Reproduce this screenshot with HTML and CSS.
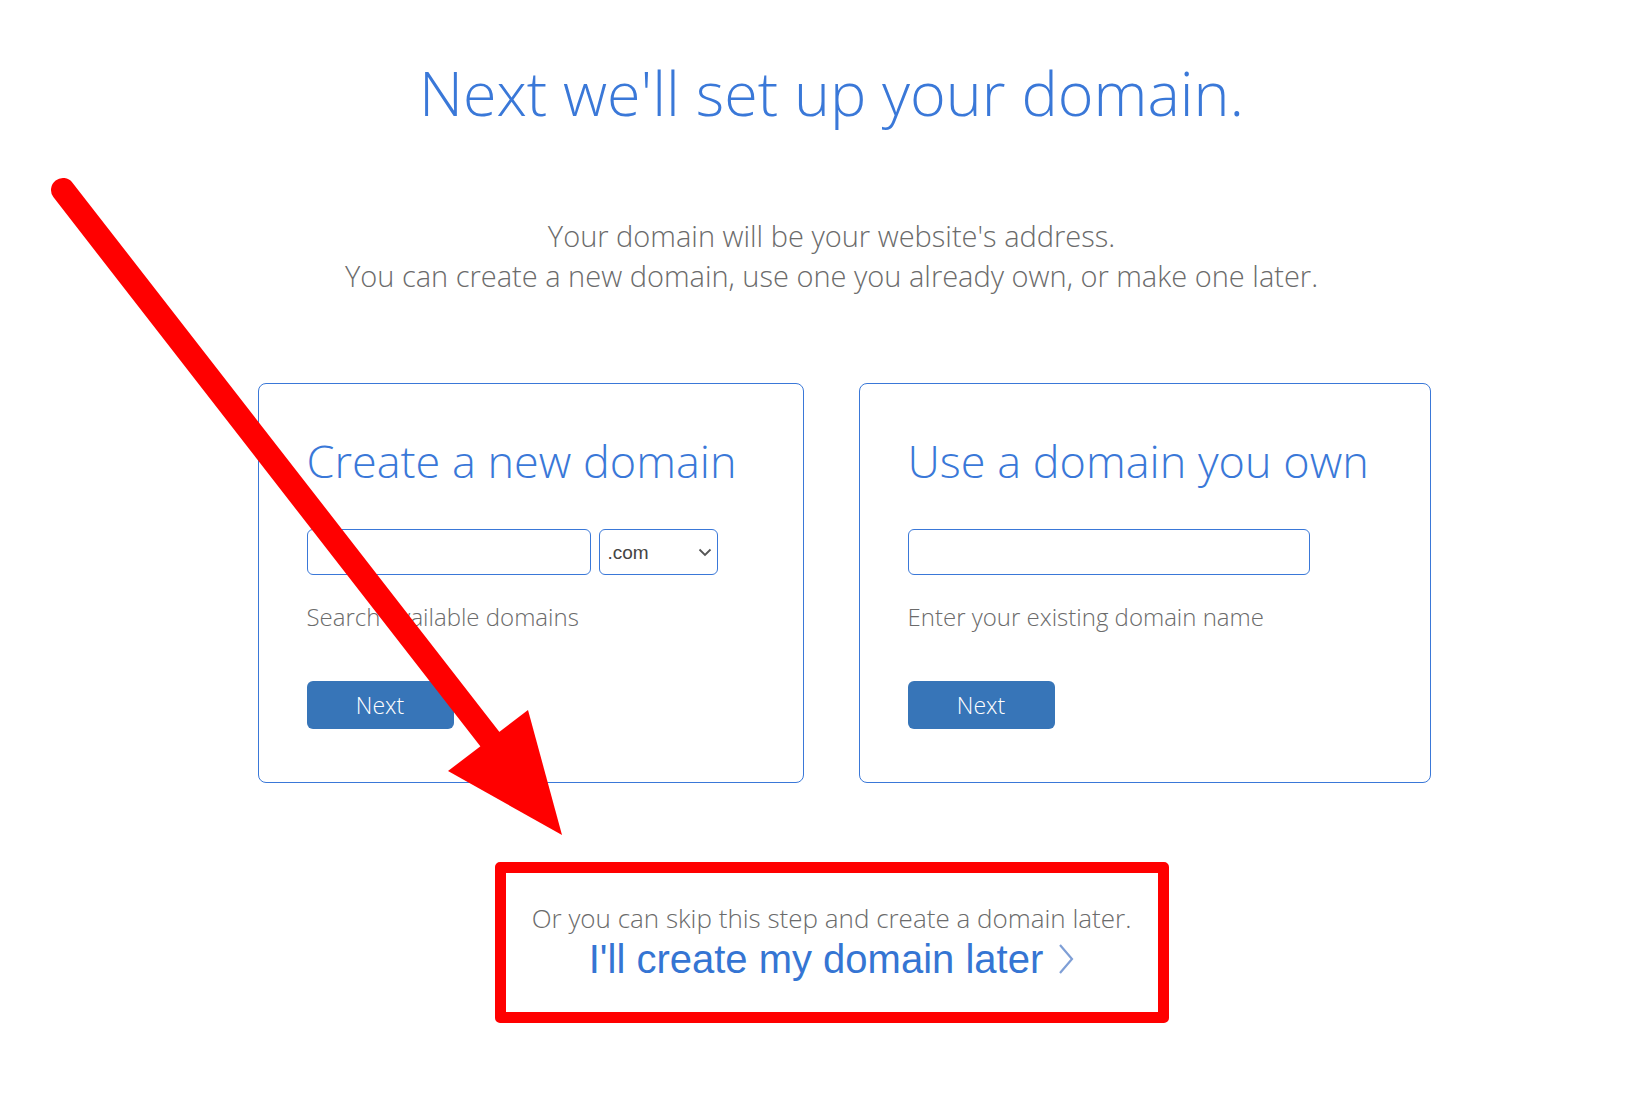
FILE: index.html
```html
<!DOCTYPE html>
<html lang="en">
<head>
  <meta charset="UTF-8" />
  <meta name="viewport" content="width=device-width, initial-scale=1.0" />
  <title>Set up your domain</title>
  <link rel="stylesheet" href="styles.css">
</head>
<body>
  <div class="page">
    <h1 class="title">Next we'll set up your domain.</h1>
    <p class="intro">
      Your domain will be your website's address.<br>
      You can create a new domain, use one you already own, or make one later.
    </p>

    <div class="cards">
      <div class="card card-new">
        <h2>Create a new domain</h2>
        <div class="field-row">
          <input type="text" class="domain-input new-input">
          <div class="tld">
            <select class="tld-select">
              <option>.com</option>
              <option>.net</option>
              <option>.org</option>
            </select>
            <svg class="tld-arrow" width="14" height="9" viewBox="0 0 14 9">
              <polyline points="1.5,1.5 7,7 12.5,1.5" fill="none" stroke="#555" stroke-width="1.8"/>
            </svg>
          </div>
        </div>
        <p class="hint">Search available domains</p>
        <button class="next-btn">Next</button>
      </div>

      <div class="card card-own">
        <h2>Use a domain you own</h2>
        <div class="field-row">
          <input type="text" class="domain-input own-input">
        </div>
        <p class="hint">Enter your existing domain name</p>
        <button class="next-btn">Next</button>
      </div>
    </div>

    <div class="skip">
      <p class="skip-text">Or you can skip this step and create a domain later.</p>
      <a href="#" class="skip-link">I'll create my domain later
        <svg class="chev" width="16" height="32" viewBox="0 0 16 32">
          <polyline points="2,2 14,16 2,30" fill="none" stroke="#7f9fd6" stroke-width="2.2"/>
        </svg>
      </a>
    </div>
  </div>

  <!-- annotation arrow drawn over the page -->
  <svg class="annotation" width="1649" height="1096" viewBox="0 0 1649 1096">
    <line x1="63" y1="190" x2="496" y2="747" stroke="#ff0000" stroke-width="24" stroke-linecap="round"/>
    <polygon points="528,710 448,771 562,835" fill="#ff0000"/>
  </svg>
</body>
</html>
```

FILE: styles.css
```css
* {
  box-sizing: border-box;
  margin: 0;
  padding: 0;
}
body {
  font-family: 'Open Sans', 'Noto Sans', sans-serif;
  font-weight: 300;
  background: #fff;
  color: #666;
  width: 1649px;
  height: 1096px;
  overflow: hidden;
  position: relative;
}
.page {
  padding: 54px 0 0 14px;
  text-align: center;
}
.title {
  font-size: 61px;
  font-weight: 300;
  line-height: 77px;
  color: #3a78d8;
}
.intro {
  margin-top: 85px;
  font-size: 29px;
  line-height: 40px;
  color: #6b6b6b;
}
.cards {
  display: flex;
  justify-content: center;
  gap: 55px;
  margin-top: 87px;
  padding-left: 25px;
  text-align: left;
}
.card {
  height: 400px;
  border: 1px solid #3a78d8;
  border-radius: 8px;
  padding: 37px 48px 0;
}
.card-new { width: 546px; }
.card-own { width: 572px; }
.card h2 {
  font-size: 45px;
  font-weight: 300;
  line-height: 80px;
  color: #3a78d8;
  white-space: nowrap;
}
.field-row {
  display: flex;
  gap: 8px;
  margin-top: 28px;
}
.domain-input {
  height: 46px;
  border: 1px solid #3a78d8;
  border-radius: 6px;
  outline: none;
  font-size: 18px;
  padding: 0 10px;
}
.new-input { width: 284px; }
.own-input { width: 402px; }
.tld {
  position: relative;
  width: 119px;
}
.tld-select {
  width: 100%;
  height: 46px;
  border: 1px solid #3a78d8;
  border-radius: 6px;
  background: #fff;
  appearance: none;
  -webkit-appearance: none;
  font-family: 'Liberation Sans', Arial, sans-serif;
  font-size: 19px;
  color: #444;
  padding: 0 0 0 8px;
  outline: none;
}
.tld-arrow {
  position: absolute;
  right: 6px;
  top: 19px;
  pointer-events: none;
}
.hint {
  margin-top: 27px;
  font-size: 24px;
  line-height: 30px;
  color: #6b6b6b;
}
.next-btn {
  margin-top: 49px;
  width: 147px;
  height: 48px;
  border: none;
  border-radius: 6px;
  background: #3775b8;
  color: #fff;
  font-family: 'Open Sans', 'Noto Sans', sans-serif;
  font-weight: 300;
  font-size: 23px;
  cursor: pointer;
}
.skip {
  width: 674px;
  height: 161px;
  margin: 79px auto 0;
  border: 11px solid #ff0000;
  border-radius: 5px;
  padding-top: 26px;
}
.skip-text {
  font-size: 26px;
  line-height: 38px;
  color: #6b6b6b;
}
.skip-link {
  display: inline-flex;
  align-items: center;
  gap: 15px;
  font-family: 'Liberation Sans', Arial, sans-serif;
  font-weight: 400;
  font-size: 40px;
  line-height: 44px;
  color: #3575d3;
  text-decoration: none;
}
.annotation {
  position: absolute;
  left: 0;
  top: 0;
  pointer-events: none;
}
```
